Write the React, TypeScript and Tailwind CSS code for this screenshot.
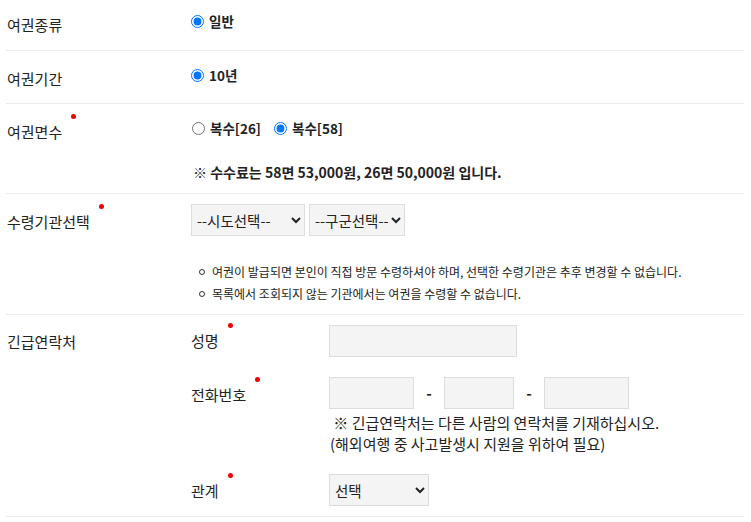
import React from "react";

const font = "font-['Noto_Sans_CJK_KR','Noto_Sans',sans-serif]";

function Req({ children }: { children: React.ReactNode }) {
  return (
    <span className="relative inline-block">
      {children}
      <span className="absolute left-[calc(100%+9px)] top-[-8px] h-[5px] w-[5px] rounded-full bg-[#f00000]" />
    </span>
  );
}

function Radio({ label, checked, name }: { label: string; checked?: boolean; name: string }) {
  return (
    <label className="flex items-center gap-[5px]">
      <input type="radio" name={name} defaultChecked={checked} className="h-[13px] w-[13px]" />
      <span className="text-[13.5px] font-bold text-[#222]">{label}</span>
    </label>
  );
}

const fieldCls = "h-[32px] border border-[#dddddd] bg-[#f4f4f4]";
const selectCls = "h-[32px] border border-[#dddddd] bg-[#f4f4f4] pl-[1px] text-[14.5px] text-[#222]";

export default function App() {
  return (
    <div className={`h-[522px] w-[751px] bg-white pl-[6px] pr-[7px] text-[15px] leading-5 text-[#222] ${font}`}>
      {/* 여권종류 */}
      <div className="flex h-[51px] border-b border-[#ebebeb]">
        <div className="w-[185px] pl-[1px] pt-[15px]">여권종류</div>
        <div className="pt-[11px]">
          <Radio name="type" label="일반" checked />
        </div>
      </div>

      {/* 여권기간 */}
      <div className="flex h-[53px] border-b border-[#ebebeb]">
        <div className="w-[185px] pl-[1px] pt-[18px]">여권기간</div>
        <div className="pt-[14px]">
          <Radio name="period" label="10년" checked />
        </div>
      </div>

      {/* 여권면수 */}
      <div className="flex h-[90px] border-b border-[#ebebeb]">
        <div className="w-[185px] pl-[1px] pt-[18px]">
          <Req>여권면수</Req>
        </div>
        <div className="pt-[14px]">
          <div className="flex items-center gap-[13px] pl-[1px]">
            <Radio name="pages" label="복수[26]" />
            <Radio name="pages" label="복수[58]" checked />
          </div>
          <p className="mt-[24px] pl-[2px] text-[14px] font-bold">
            ※ 수수료는 58면 53,000원, 26면 50,000원 입니다.
          </p>
        </div>
      </div>

      {/* 수령기관선택 */}
      <div className="flex h-[121px] border-b border-[#ebebeb]">
        <div className="w-[185px] pl-[1px] pt-[18px]">
          <Req>수령기관선택</Req>
        </div>
        <div className="pt-[10px]">
          <div className="flex gap-[4px]">
            <select className={`${selectCls} w-[114px]`} defaultValue="">
              <option value="">--시도선택--</option>
            </select>
            <select className={`${selectCls} w-[96px]`} defaultValue="">
              <option value="">--구군선택--</option>
            </select>
          </div>
          <ul className="mt-[25px] pl-[8px] text-[12px] leading-[22px]">
            <li className="flex items-center gap-[7px]">
              <span className="h-[6px] w-[6px] rounded-full border-[1.5px] border-[#333]" />
              여권이 발급되면 본인이 직접 방문 수령하셔야 하며, 선택한 수령기관은 추후 변경할 수 없습니다.
            </li>
            <li className="flex items-center gap-[7px]">
              <span className="h-[6px] w-[6px] rounded-full border-[1.5px] border-[#333]" />
              목록에서 조회되지 않는 기관에서는 여권을 수령할 수 없습니다.
            </li>
          </ul>
        </div>
      </div>

      {/* 긴급연락처 */}
      <div className="flex h-[202px] border-b border-[#ebebeb]">
        <div className="w-[185px] pl-[1px] pt-[17px]">긴급연락처</div>
        <div className="pt-[10px]">
          <div className="flex items-center">
            <div className="w-[138px]">
              <Req>성명</Req>
            </div>
            <input className={`${fieldCls} w-[188px]`} />
          </div>

          <div className="mt-[20px] flex items-center">
            <div className="w-[138px] pt-[3px]">
              <Req>전화번호</Req>
            </div>
            <input className={`${fieldCls} w-[85px]`} />
            <span className="w-[30px] text-center font-bold">-</span>
            <input className={`${fieldCls} w-[70px]`} />
            <span className="w-[30px] text-center font-bold">-</span>
            <input className={`${fieldCls} w-[85px]`} />
          </div>

          <div className="ml-[138px] mt-[3px] pl-[1px] leading-[21px]">
            <p>&nbsp;※ 긴급연락처는 다른 사람의 연락처를 기재하십시오.</p>
            <p>(해외여행 중 사고발생시 지원을 위하여 필요)</p>
          </div>

          <div className="mt-[20px] flex items-center">
            <div className="w-[138px] pt-[2px]">
              <Req>관계</Req>
            </div>
            <select className={`${selectCls} w-[100px]`} defaultValue="">
              <option value="">선택</option>
            </select>
          </div>
        </div>
      </div>
    </div>
  );
}
